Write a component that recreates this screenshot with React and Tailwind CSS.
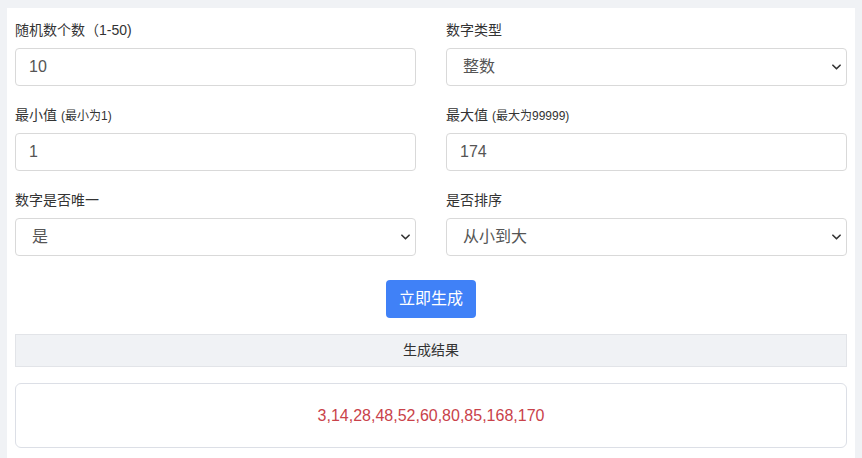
import React, { useState } from 'react'

const font = { fontFamily: '"Liberation Sans", "Noto Sans CJK SC", sans-serif' }

function Chevron() {
    return (
        <svg width="9" height="6" viewBox="0 0 10 6" className="pointer-events-none absolute right-[6px] top-1/2 -translate-y-1/2">
            <path d="M1 1l4 4 4-4" fill="none" stroke="#333" strokeWidth="1.8" strokeLinecap="round" strokeLinejoin="round" />
        </svg>
    )
}

function Field({ label, sub, children }) {
    return (
        <div>
            <label className="block h-5 leading-5 text-[14px] text-[#333] mb-2">
                {label}
                {sub && <span className="text-[12px] ml-1">{sub}</span>}
            </label>
            {children}
        </div>
    )
}

function TextInput({ value, onChange }) {
    return (
        <input
            type="text"
            value={value}
            onChange={(e) => onChange(e.target.value)}
            className="block w-full h-[38px] px-[13px] rounded border border-[#d9d9d9] bg-white text-[16px] text-[#555] outline-none"
            style={font}
        />
    )
}

function Select({ value, onChange, options }) {
    return (
        <div className="relative">
            <select
                value={value}
                onChange={(e) => onChange(e.target.value)}
                className="block w-full h-[38px] pl-[16px] pr-8 appearance-none rounded border border-[#d9d9d9] bg-white text-[16px] text-[#555] outline-none"
                style={font}
            >
                {options.map((o) => (
                    <option key={o} value={o}>{o}</option>
                ))}
            </select>
            <Chevron />
        </div>
    )
}

export default function App() {
    const [count, setCount] = useState('10')
    const [type, setType] = useState('整数')
    const [min, setMin] = useState('1')
    const [max, setMax] = useState('174')
    const [unique, setUnique] = useState('是')
    const [sort, setSort] = useState('从小到大')
    const [result] = useState('3,14,28,48,52,60,80,85,168,170')

    return (
        <div className="min-h-screen bg-[#f0f2f5] px-[7px] pt-2" style={font}>
            <div className="bg-white px-2 pt-3 pb-4">
                {/* 表单 */}
                <div className="grid grid-cols-2 gap-x-[30px] gap-y-[19px]">
                    <Field label="随机数个数（1-50)">
                        <TextInput value={count} onChange={setCount} />
                    </Field>
                    <Field label="数字类型">
                        <Select value={type} onChange={setType} options={['整数', '小数']} />
                    </Field>
                    <Field label="最小值" sub="(最小为1)">
                        <TextInput value={min} onChange={setMin} />
                    </Field>
                    <Field label="最大值" sub="(最大为99999)">
                        <TextInput value={max} onChange={setMax} />
                    </Field>
                    <Field label="数字是否唯一">
                        <Select value={unique} onChange={setUnique} options={['是', '否']} />
                    </Field>
                    <Field label="是否排序">
                        <Select value={sort} onChange={setSort} options={['从小到大', '从大到小', '不排序']} />
                    </Field>
                </div>

                <div className="flex justify-center mt-6">
                    <button className="h-[38px] w-[90px] rounded bg-[#4081f7] text-white text-[16px]">
                        立即生成
                    </button>
                </div>

                {/* 结果 */}
                <div className="mt-4 h-[33px] flex items-center justify-center border border-[#e2e4e8] bg-[#f0f2f5] text-[14px] text-[#333]">
                    生成结果
                </div>
                <div className="mt-4 h-[65px] flex items-center justify-center rounded-md border border-[#dcdfe6] text-[16px] text-[#c9424a]">
                    {result}
                </div>
            </div>
        </div>
    )
}
